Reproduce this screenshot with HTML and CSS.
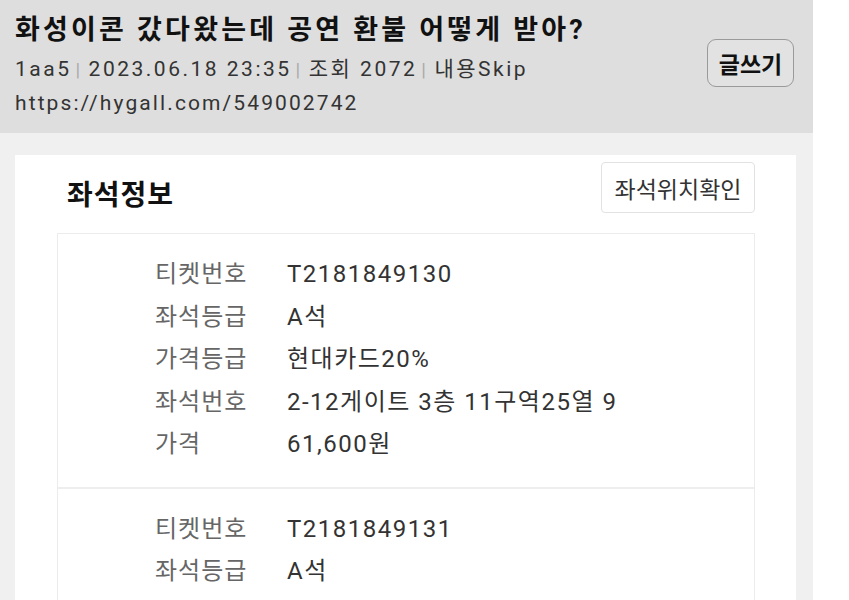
FILE: index.html
```html
<!DOCTYPE html>
<html lang="ko">
<head>
    <meta charset="UTF-8">
    <meta name="viewport" content="width=device-width, initial-scale=1.0">
    <title>화성이콘 갔다왔는데 공연 환불 어떻게 받아?</title>
    <link rel="stylesheet" href="styles.css">
</head>
<body>
    <div class="page">
        <div class="post-header">
            <div class="post-info">
                <h1>화성이콘 갔다왔는데 공연 환불 어떻게 받아?</h1>
                <div class="meta">1aa5<span class="sep">|</span>2023.06.18 23:35<span class="sep">|</span>조회 2072<span class="sep">|</span>내용Skip</div>
                <div class="url">https://hygall.com/549002742</div>
            </div>
            <button class="write-btn">글쓰기</button>
        </div>

        <div class="content">
            <div class="card">
                <div class="card-head">
                    <h2>좌석정보</h2>
                    <button class="seat-btn">좌석위치확인</button>
                </div>

                <div class="tickets">
                    <div class="ticket">
                        <div class="row"><span class="label">티켓번호</span><span class="value">T2181849130</span></div>
                        <div class="row"><span class="label">좌석등급</span><span class="value">A석</span></div>
                        <div class="row"><span class="label">가격등급</span><span class="value">현대카드20%</span></div>
                        <div class="row"><span class="label">좌석번호</span><span class="value">2-12게이트 3층 11구역25열 9</span></div>
                        <div class="row"><span class="label">가격</span><span class="value">61,600원</span></div>
                    </div>
                    <div class="ticket">
                        <div class="row"><span class="label">티켓번호</span><span class="value">T2181849131</span></div>
                        <div class="row"><span class="label">좌석등급</span><span class="value">A석</span></div>
                    </div>
                </div>
            </div>
        </div>
    </div>
</body>
</html>
```

FILE: styles.css
```css
body {
    margin: 0;
    background-color: #fff;
    font-family: Roboto, "Noto Sans CJK KR", sans-serif;
    color: #222;
    overflow: hidden;
}
.page {
    width: 813px;
    height: 600px;
    overflow: hidden;
}
.post-header {
    background-color: #dedede;
    height: 133px;
    box-sizing: border-box;
    padding: 11px 19px 0 15px;
    display: flex;
    justify-content: space-between;
}
.post-header h1 {
    margin: 0;
    font-size: 27px;
    font-weight: bold;
    line-height: 38px;
    letter-spacing: 3.2px;
    color: #111;
    white-space: nowrap;
}
.meta,
.url {
    font-size: 21px;
    line-height: 32px;
    color: #333;
}
.meta {
    margin-top: 4px;
    letter-spacing: 2.5px;
}
.url {
    margin-top: 1px;
    letter-spacing: 2.1px;
}
.sep {
    color: #aaa;
    margin: 0 6px 0 4px;
    font-size: 19px;
}
.write-btn {
    margin-top: 28px;
    width: 87px;
    height: 48px;
    border: 1px solid #9a9a9a;
    border-radius: 9px;
    background-color: #e2e2e2;
    font-family: Roboto, "Noto Sans CJK KR", sans-serif;
    font-size: 23px;
    font-weight: bold;
    color: #111;
    padding: 0;
}
.content {
    background-color: #f0f0f0;
    height: 467px;
    padding: 22px 17px 0 15px;
}
.card {
    background-color: #fff;
    height: 100%;
    padding: 7px 41px 0 42px;
}
.card-head {
    display: flex;
    justify-content: space-between;
    align-items: center;
}
.card-head h2 {
    margin: 10px 0 0 10px;
    font-size: 28px;
    font-weight: bold;
    letter-spacing: 1px;
    color: #111;
}
.seat-btn {
    width: 154px;
    height: 51px;
    background-color: #fff;
    border: 1px solid #e2e2e2;
    border-radius: 4px;
    font-family: Roboto, "Noto Sans CJK KR", sans-serif;
    font-size: 23px;
    color: #333;
    padding: 0;
}
.tickets {
    margin-top: 20px;
    border: 1px solid #ececec;
    border-bottom: none;
}
.ticket {
    padding: 19px 0 21px 97px;
    border-bottom: 2px solid #eeeeee;
}
.row {
    display: flex;
    line-height: 42.5px;
    font-size: 24px;
}
.label {
    width: 132px;
    color: #666;
    letter-spacing: 1px;
}
.value {
    color: #333;
    letter-spacing: 1.5px;
}
```
